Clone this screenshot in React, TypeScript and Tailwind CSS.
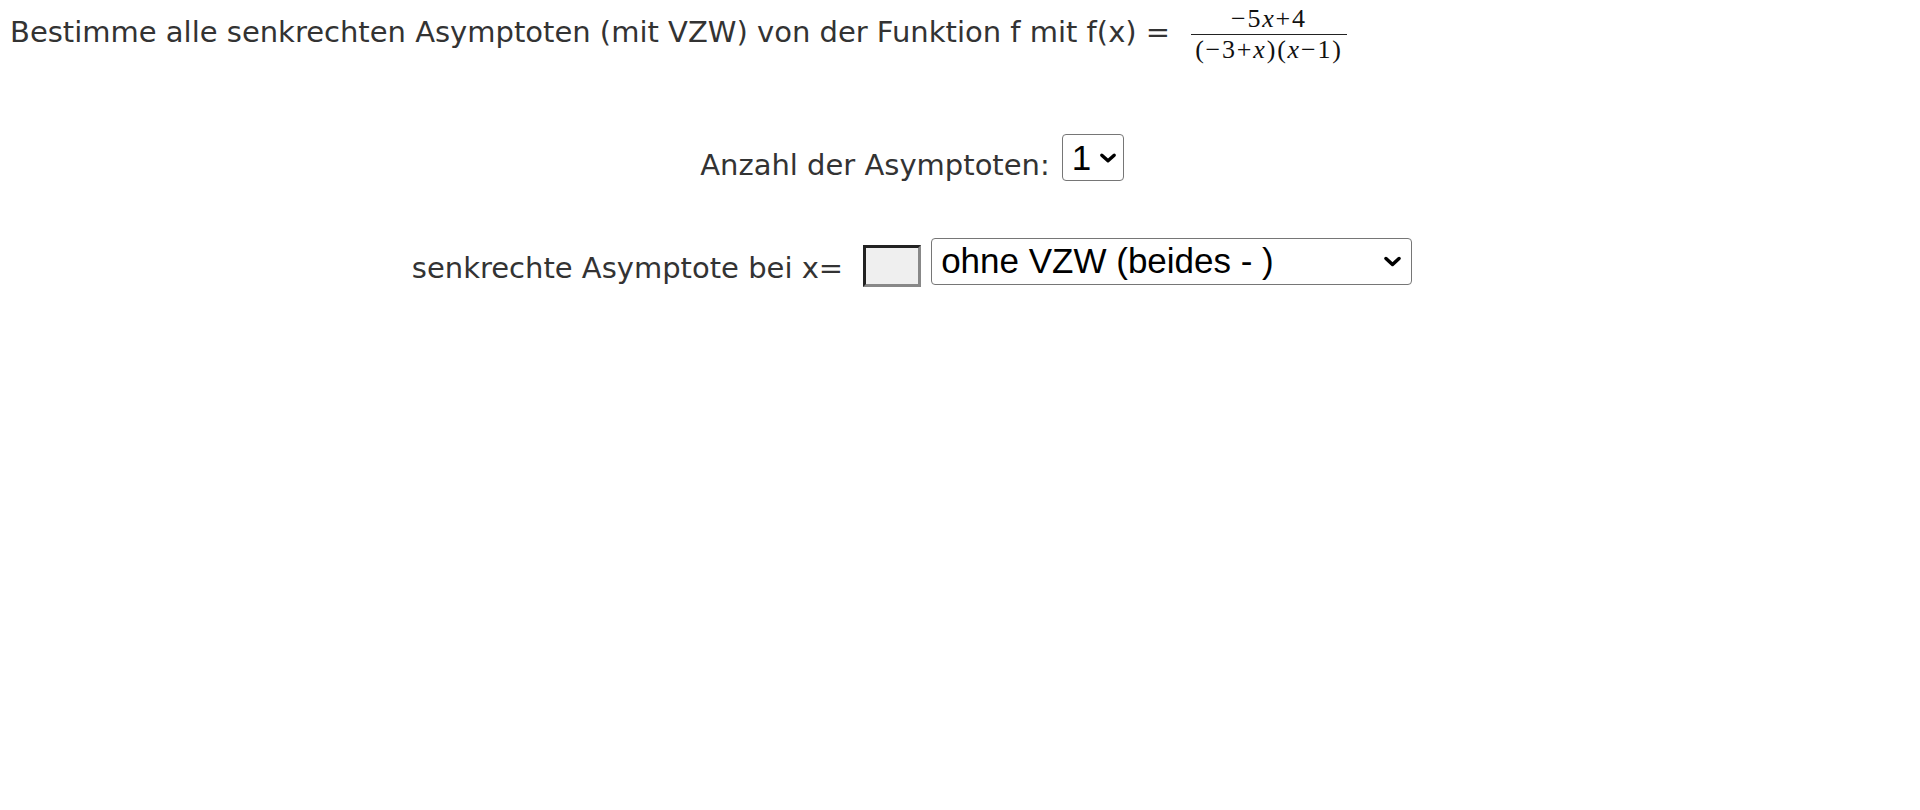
import React from 'react';

const Chevron = ({ className }: { className?: string }) => (
  <svg viewBox="0 0 16 16" className={className} fill="none" stroke="#000" strokeWidth="3" strokeLinecap="round" strokeLinejoin="round">
    <path d="M2.5 5.5 L8 10.5 L13.5 5.5" />
  </svg>
);

const Fraction = () => (
  <span className="inline-flex flex-col items-center align-middle ml-[21px] font-['Liberation_Serif',serif] text-[26px] leading-none text-[#111] tracking-[1.8px]">
    <span className="px-[4px] pb-[2px] pt-[3px]">
      −5<i>x</i>+4
    </span>
    <span className="w-full h-[1.5px] bg-[#222]" />
    <span className="px-[4px] pt-[2px]">
      (−3+<i>x</i>)(<i>x</i>−1)
    </span>
  </span>
);

export default function App() {
  return (
    <div className="w-[1920px] h-[810px] bg-white font-['DejaVu_Sans',Verdana,sans-serif] text-[#333] text-[29px]">
      <div className="pl-[10px] pt-[4px] flex items-center h-[62px]">
        <span>Bestimme alle senkrechten Asymptoten (mit VZW) von der Funktion f mit f(x) =</span>
        <Fraction />
      </div>

      <div className="w-[1824px] flex flex-col items-center">
        <div className="mt-[66px] flex items-center">
          <span className="mt-[16px]">Anzahl der Asymptoten:</span>
          <div className="ml-[12px] w-[62px] h-[47px] border border-[#767676] rounded-[4px] flex items-center justify-between pl-[9px] pr-[6px] font-['Liberation_Sans',Arial,sans-serif] text-[35px] text-black">
            <span>1</span>
            <Chevron className="w-[18px] h-[18px]" />
          </div>
        </div>

        <div className="mt-[45px] flex items-center">
          <span className="mt-[14px]">senkrechte Asymptote bei x=</span>
          <div className="ml-[20px] mt-[9px] w-[58px] h-[42px] bg-[#efefef] border-[3px] border-t-[#222] border-l-[#222] border-b-[#888] border-r-[#888]" />
          <div className="ml-[10px] w-[481px] h-[47px] border border-[#767676] rounded-[4px] flex items-center justify-between pl-[9px] pr-[9px] font-['Liberation_Sans',Arial,sans-serif] text-[35px] text-black">
            <span>ohne VZW (beides - )</span>
            <Chevron className="w-[19px] h-[19px]" />
          </div>
        </div>
      </div>
    </div>
  );
}
